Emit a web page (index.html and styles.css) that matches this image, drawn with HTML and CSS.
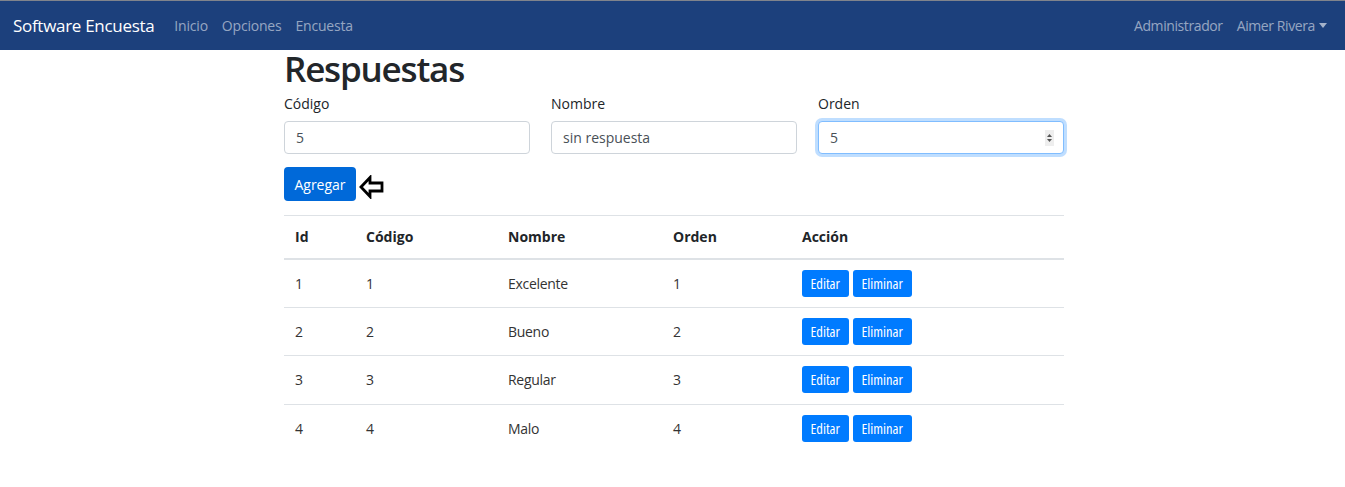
FILE: index.html
```html
<!DOCTYPE html>
<html lang="es">
<head>
<meta charset="utf-8">
<title>Respuestas</title>
<link rel="stylesheet" href="styles.css">
</head>
<body>
<nav class="navbar">
  <a class="brand" href="#">Software Encuesta</a>
  <ul class="nav-links">
    <li><a href="#">Inicio</a></li>
    <li><a href="#">Opciones</a></li>
    <li><a href="#">Encuesta</a></li>
  </ul>
  <ul class="nav-links nav-right">
    <li><a href="#">Administrador</a></li>
    <li><a href="#" class="dropdown">Aimer Rivera<span class="caret"></span></a></li>
  </ul>
</nav>
<main class="container">
  <h1 class="title">Respuestas</h1>
  <form class="form-row">
    <div class="field">
      <label class="label">Código</label>
      <input class="input" type="text" value="5">
    </div>
    <div class="field">
      <label class="label">Nombre</label>
      <input class="input" type="text" value="sin respuesta">
    </div>
    <div class="field">
      <label class="label">Orden</label>
      <div class="input input-focus">
        <span>5</span>
        <span class="spinner">
          <svg width="9" height="14" viewBox="0 0 9 14"><path d="M4.5 3 L7 6 H2 Z" fill="#555"/><path d="M4.5 11 L7 8 H2 Z" fill="#555"/></svg>
        </span>
      </div>
    </div>
  </form>
  <div class="actions">
    <button class="btn btn-add" type="button">Agregar</button>
    <svg class="arrow" width="26" height="24" viewBox="0 0 26 24">
      <path d="M2 12 L11 2.5 V8 H23 V16 H11 V21.5 Z" fill="none" stroke="#000" stroke-width="2.8" stroke-linejoin="miter"/>
    </svg>
  </div>
  <table class="table">
    <thead>
      <tr><th class="c-id">Id</th><th class="c-cod">Código</th><th class="c-nom">Nombre</th><th class="c-ord">Orden</th><th>Acción</th></tr>
    </thead>
    <tbody>
      <tr><td>1</td><td>1</td><td>Excelente</td><td>1</td><td><button class="btn-sm">Editar</button><button class="btn-sm">Eliminar</button></td></tr>
      <tr><td>2</td><td>2</td><td>Bueno</td><td>2</td><td><button class="btn-sm">Editar</button><button class="btn-sm">Eliminar</button></td></tr>
      <tr><td>3</td><td>3</td><td>Regular</td><td>3</td><td><button class="btn-sm">Editar</button><button class="btn-sm">Eliminar</button></td></tr>
      <tr><td>4</td><td>4</td><td>Malo</td><td>4</td><td><button class="btn-sm">Editar</button><button class="btn-sm">Eliminar</button></td></tr>
    </tbody>
  </table>
</main>
</body>
</html>
```
FILE: styles.css
```css
* { box-sizing: border-box; }
body {
  margin: 0;
  font-family: "Open Sans", "Noto Sans", sans-serif;
  color: #212529;
  background: #fff;
  font-size: 14px;
}
a { text-decoration: none; }

.navbar {
  display: flex;
  align-items: center;
  height: 50px;
  border-top: 1px solid #80848c;
  background: #1c407c;
  padding: 0 18px 0 13px;
}
.brand {
  color: #fff;
  font-size: 17px;
  margin-right: 13px;
  letter-spacing: -0.3px;
}
.nav-links {
  display: flex;
  list-style: none;
  margin: 0;
  padding: 0;
}
.nav-links a {
  display: block;
  color: rgba(255,255,255,0.55);
  font-size: 14px;
  padding: 0 7px;
  letter-spacing: -0.2px;
}
.nav-right { margin-left: auto; }
.nav-right a { letter-spacing: -0.4px; }
.nav-right li:last-child a { padding-right: 0; }
.caret {
  display: inline-block;
  margin-left: 4px;
  vertical-align: 3px;
  border-top: 5px solid rgba(255,255,255,0.6);
  border-left: 4px solid transparent;
  border-right: 4px solid transparent;
}

.container {
  width: 783px;
  padding-left: 3px;
  margin: 0 auto;
}
.title {
  font-size: 35px;
  font-weight: 600;
  margin: -3px 0 0;
  line-height: 44px;
  letter-spacing: -1.2px;
  color: #22262a;
}
.form-row {
  display: grid;
  grid-template-columns: repeat(3, 1fr);
  column-gap: 21px;
  margin-top: 3px;
}
.field { display: flex; flex-direction: column; }
.label {
  font-size: 14px;
  line-height: 20px;
  margin-bottom: 7px;
}
.input {
  height: 33px;
  border: 1px solid #ced4da;
  border-radius: 4px;
  padding: 0 11px;
  font: inherit;
  font-size: 14px;
  color: #495057;
  background: #fff;
  width: 100%;
}
.input-focus {
  display: flex;
  align-items: center;
  justify-content: space-between;
  border-color: #80bdff;
  box-shadow: 0 0 0 3px rgba(0,123,255,0.25);
}
.spinner {
  display: flex;
  align-items: center;
  background: #eee;
  height: 16px;
  margin-right: -2px;
}

.actions {
  display: flex;
  align-items: center;
  margin-top: 13px;
  gap: 3px;
}
.btn {
  border: none;
  font: inherit;
  font-size: 14px;
  color: #fff;
  border-radius: 4px;
}
.btn-add {
  background: #0069d9;
  height: 34px;
  width: 72px;
  padding: 0;
}
.arrow { margin-top: 5px; }

.table {
  width: 100%;
  border-collapse: collapse;
  margin-top: 14px;
}
.table th, .table td {
  text-align: left;
  padding: 0 11px;
  border-top: 1px solid #dee2e6;
  height: 48.6px;
  font-size: 14px;
}
.table td { letter-spacing: -0.3px; color: #333; }
.table th {
  font-weight: 700;
  height: 43px;
  border-bottom: 2px solid #dee2e6;
}
.c-id { width: 71px; }
.c-cod { width: 142px; }
.c-nom { width: 165px; }
.c-ord { width: 129px; }
.btn-sm {
  background: #007bff;
  color: #fff;
  border: none;
  border-radius: 3px;
  font-family: "Open Sans", sans-serif;
  font-stretch: 87%;
  font-size: 14.5px;
  letter-spacing: 0;
  height: 27px;
  padding: 0 9px 0 8.5px;
  margin-right: 4px;
  vertical-align: middle;
}
```
